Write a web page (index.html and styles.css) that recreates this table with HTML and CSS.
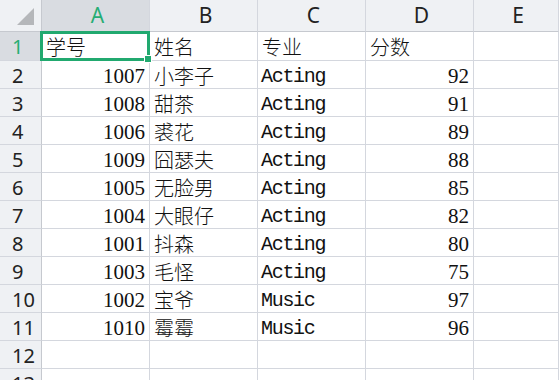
FILE: index.html
```
<!DOCTYPE html>
<html lang="zh-CN">
<head>
<meta charset="utf-8">
<link rel="stylesheet" href="styles.css">
</head>
<body>
<div class="sheet">
  <div class="corner"><svg width="17" height="17" viewBox="0 0 17 17"><polygon points="17,0 17,17 0,17" fill="#b5b7ba"/></svg></div>
  <div class="ch sel">A</div><div class="ch">B</div><div class="ch">C</div><div class="ch">D</div><div class="ch">E</div>

  <div class="rh sel">1</div><div class="c cjk">学号</div><div class="c cjk">姓名</div><div class="c cjk">专业</div><div class="c cjk">分数</div><div class="c"></div>
  <div class="rh">2</div><div class="c num">1007</div><div class="c cjk">小李子</div><div class="c mono">Acting</div><div class="c num">92</div><div class="c"></div>
  <div class="rh">3</div><div class="c num">1008</div><div class="c cjk">甜茶</div><div class="c mono">Acting</div><div class="c num">91</div><div class="c"></div>
  <div class="rh">4</div><div class="c num">1006</div><div class="c cjk">裘花</div><div class="c mono">Acting</div><div class="c num">89</div><div class="c"></div>
  <div class="rh">5</div><div class="c num">1009</div><div class="c cjk">囧瑟夫</div><div class="c mono">Acting</div><div class="c num">88</div><div class="c"></div>
  <div class="rh">6</div><div class="c num">1005</div><div class="c cjk">无脸男</div><div class="c mono">Acting</div><div class="c num">85</div><div class="c"></div>
  <div class="rh">7</div><div class="c num">1004</div><div class="c cjk">大眼仔</div><div class="c mono">Acting</div><div class="c num">82</div><div class="c"></div>
  <div class="rh">8</div><div class="c num">1001</div><div class="c cjk">抖森</div><div class="c mono">Acting</div><div class="c num">80</div><div class="c"></div>
  <div class="rh">9</div><div class="c num">1003</div><div class="c cjk">毛怪</div><div class="c mono">Acting</div><div class="c num">75</div><div class="c"></div>
  <div class="rh">10</div><div class="c num">1002</div><div class="c cjk">宝爷</div><div class="c mono">Music</div><div class="c num">97</div><div class="c"></div>
  <div class="rh">11</div><div class="c num">1010</div><div class="c cjk">霉霉</div><div class="c mono">Music</div><div class="c num">96</div><div class="c"></div>
  <div class="rh">12</div><div class="c"></div><div class="c"></div><div class="c"></div><div class="c"></div><div class="c"></div>
  <div class="rh">13</div><div class="c"></div><div class="c"></div><div class="c"></div><div class="c"></div><div class="c"></div>

  <div class="selbox"><span class="handle"></span></div>
</div>
</body>
</html>
```

FILE: styles.css
```
html, body {
  margin: 0;
  padding: 0;
  background: #ffffff;
  overflow: hidden;
}
.sheet {
  position: relative;
  display: grid;
  grid-template-columns: 42px repeat(4, 108px) 1fr;
  grid-template-rows: 32px 29px repeat(12, 28px);
  width: 559px;
  height: 380px;
  overflow: hidden;
}
.corner, .ch, .rh, .c {
  box-sizing: border-box;
  border-right: 1px solid #d4d7de;
  border-bottom: 1px solid #d4d7de;
  overflow: hidden;
  white-space: nowrap;
}
.corner {
  background: #eff1f4;
  display: flex;
  align-items: flex-start;
  justify-content: flex-start;
  padding: 8px 0 0 17px;
  border-right-color: #c6c9cf;
  border-bottom-color: #c6c9cf;
}
.ch {
  background: #eff1f4;
  font-family: "Noto Sans", "Open Sans", sans-serif;
  font-size: 21px;
  color: #222;
  text-align: center;
  line-height: 31px;
  padding-left: 4px;
  border-bottom-color: #c6c9cf;
}
.rh {
  background: #eff1f4;
  font-family: "Noto Sans", "Open Sans", sans-serif;
  font-size: 20px;
  color: #222;
  line-height: 27px;
  padding-left: 12px;
  padding-top: 1px;
  border-right-color: #c6c9cf;
}
.sel {
  background: #d9dce1;
  color: #27ad74;
}
.c {
  background: #fff;
  font-size: 21px;
  color: #111;
  line-height: 27px;
  padding: 0 4px;
}
.num {
  font-family: "Liberation Serif", serif;
  text-align: right;
  padding-top: 2px;
}
.cjk {
  font-family: "Noto Sans CJK SC", sans-serif;
  font-weight: 300;
  font-size: 20px;
  padding-left: 4px;
  padding-top: 1px;
  line-height: 28px;
}
.mono {
  font-family: "Liberation Mono", monospace;
  font-size: 20px;
  letter-spacing: -1.3px;
  padding-left: 3px;
  padding-top: 2px;
}
.selbox {
  position: absolute;
  left: 40px;
  top: 31px;
  width: 110px;
  height: 30px;
  box-sizing: border-box;
  border: 3px solid #21a96f;
}
.handle {
  position: absolute;
  right: -5px;
  bottom: -5px;
  width: 6px;
  height: 6px;
  background: #21a96f;
  border: 1px solid #fff;
}
```
